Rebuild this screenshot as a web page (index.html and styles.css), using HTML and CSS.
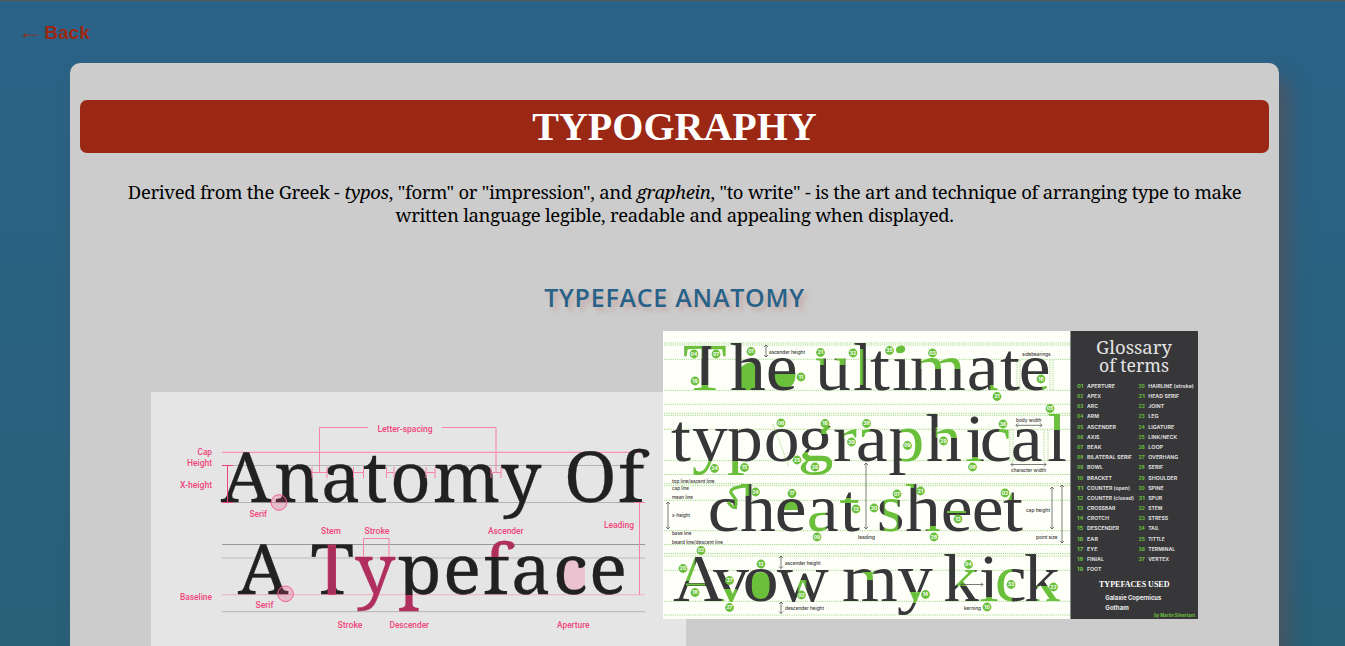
FILE: index.html
```html
<!DOCTYPE html>
<html lang="en">
<head>
<meta charset="utf-8">
<title>Typography</title>
<link rel="stylesheet" href="styles.css">
</head>
<body>
<a class="back"><span class="back-arrow">←</span> Back</a>
<main class="card">
  <h1 class="title">TYPOGRAPHY</h1>
  <p class="intro">Derived from the Greek - <em>typos</em>, "form" or "impression", and <em>graphein</em>, "to write" - is the art and technique of arranging type to make written language legible, readable and appealing when displayed.</p>
  <h2 class="subtitle">TYPEFACE ANATOMY</h2>
  <div class="gallery">
    <svg class="anatomy" viewBox="151 392 535 254">
      <rect x="151" y="392" width="535" height="254" fill="#e5e5e5"/>
      <g fill="none" stroke-width="1">
        <path d="M222 465.5H645M222 502.5H645M222 611.7H645" stroke="#b4b4b4"/>
        <path d="M222 544.5H645" stroke="#999"/>
        <path d="M222 558H645" stroke="#c8c8c8" stroke-width="1.5"/>
        <path d="M222 594.7H645" stroke="#efb9c5" stroke-width="1.3"/>
        <path d="M222 452.3H640" stroke="#f783a5"/>
      </g>
      <path d="M563 575Q563 560 574 560L584 563V567H585V587Q580 591 574 591Q563 590 563 575Z" fill="#ebc3d0"/>
      <g id="anatomyWords"></g>
      <rect x="328" y="545" width="7.5" height="49.5" fill="#a92f5b" stroke="#e43a72" stroke-width=".6"/>
      <g class="pink-lines">
        <path d="M368 427.5H319.5V472.5M442 427.5H496V472.5M363.5 557V538.5H389V557M639.5 502.5V594.5M634 502.5H645"/>
        <path d="M312 472.5H327M312 467V478M327 467V478M353.5 472.5H363.5M353.5 467V478M363.5 467V478M386.5 472.5H394M386.5 467V478M394 467V478M426 472.5H435M426 467V478M435 467V478M491 472.5H501M491 467V478M501 467V478"/>
        <path d="M222 465.5H233M222 502.5H233M227.5 465.5V502.5" stroke="#f0457c"/>
        <circle cx="279" cy="502.5" r="7.8"/>
        <circle cx="285.5" cy="593.8" r="7.8"/>
      </g>
      <g id="anatomyLabels"></g>
    </svg>
    <svg class="sheet" viewBox="663 331 535 288">
      <rect x="663" y="331" width="407.5" height="288" fill="#fffff9"/>
      <g id="guides"></g>
      <path d="M740 390V368Q746 362 753 362Q757 364 757 390ZM772 373H795.5Q796 388 784 388Q773 386 772 373Z" fill="#6bc03b"/>
      <path d="M781 510Q783 500 792 500Q800 500 801 510Z" fill="#6bc03b"/>
      <ellipse cx="761" cy="586" rx="12" ry="14" fill="#6bc03b"/>
      <g id="sheetWords"></g>
      <g class="flourish">
        <path d="M728 502Q737 514 736 500Q734 497 731 493Q729 487 748 486" stroke-width="3"/>
        <path d="M840 501.5H858" stroke-width="2"/>
        <path d="M947 512H966" stroke-width="2"/>
        <path d="M686 584.5H705" stroke-width="2"/>
        <path d="M773 424L789 467" stroke-width=".7" stroke-dasharray="1 1"/>
        <circle cx="899.5" cy="349.7" r="3.5" fill="#6bc03b" stroke="none"/>
      </g>
      <g id="arrows"></g>
      <g id="badges"></g>
      <g id="sheetLabels"></g>
      <rect x="1070.5" y="331" width="127.5" height="288" fill="#373739"/>
      <g id="glossary"></g>
    </svg>
  </div>
</main>
<script src="script.js"></script>
</body>
</html>
```

FILE: styles.css
```css
* { box-sizing: border-box; }
html { height: 100%; overflow: hidden; }
body {
  margin: 0;
  height: 646px;
  overflow: hidden;
  border-top: 1px solid #5a5a5a;
  background: linear-gradient(#2a6388, #286078);
  color: #000;
}
.back {
  display: block;
  height: 62px;
  padding: 19px 0 0 17px;
  color: #9b2815;
  font: bold 19px/24px "Liberation Sans", Arial, sans-serif;
  white-space: nowrap;
}
.back-arrow {
  display: inline-block;
  width: 22px;
  font: normal 20px/24px "Liberation Serif", serif;
  transform: scale(1.3, .9);
  transform-origin: left center;
}
.card {
  width: 1209px;
  height: 583px;
  margin-left: 70px;
  padding: 37px 10px 0;
  border-radius: 10px 10px 0 0;
  background: #ccc;
  box-shadow: 10px 14px 20px rgba(89, 78, 86, .7);
}
.title {
  height: 53px;
  margin: 0;
  border-radius: 7px;
  background: #9b2815;
  color: #fff;
  font: bold 40px/53px "Liberation Serif", "Times New Roman", serif;
  text-align: center;
}
.intro {
  margin: 27px 0 0;
  padding: 0 20px;
  font: 18.5px/23px "Noto Serif", "DejaVu Serif Condensed", "DejaVu Serif", serif;
  letter-spacing: -.37px;
  word-spacing: .3px;
  text-align: center;
  text-indent: 20px;
}
.subtitle {
  margin: 54px 0 0;
  color: #286288;
  font: 600 25px/34px "Open Sans", "Noto Sans", sans-serif;
  letter-spacing: .75px;
  text-align: center;
  text-shadow: 4px 4px 5px rgba(180, 60, 50, .25);
}
.gallery {
  display: flex;
  align-items: flex-start;
  padding: 17px 0 0 71px;
}
.anatomy { width: 535px; height: 254px; margin-top: 61px; flex: none; }
.sheet { width: 535px; height: 288px; margin-left: -23px; flex: none; }
.pink-lines { fill: none; stroke: #f783a5; stroke-width: 1; }
.pink-lines circle { fill: rgba(240, 69, 124, .25); stroke: #f0628f; }
.anatomy-label { font: 500 8.2px Roboto, sans-serif; fill: #f0457c; }
.flourish { fill: none; stroke: #6bc03b; }
.guide { fill: none; stroke: #a3d98a; stroke-width: 1; stroke-dasharray: 1.2 1; }
.arrow { fill: none; stroke: #444; stroke-width: .7; }
.badge { fill: #6bc03b; }
.badge-number { font: bold 5px Inter, sans-serif; fill: #fff; text-anchor: middle; }
.sheet-label { font: 500 4.8px Inter, sans-serif; fill: #333; }
.gloss-title { font: 400 18.5px "Noto Serif", serif; fill: #e4e4e4; }
.gloss-number { font: bold 5px Inter, sans-serif; fill: #6bc03b; }
.gloss-term { font: bold 5px Inter, sans-serif; fill: #ddd; }
.gloss-used { font: bold 8px "Liberation Serif", serif; fill: #fff; }
.gloss-face { font: bold 6px Inter, sans-serif; fill: #eee; }
.gloss-credit { font: bold 4.5px Inter, sans-serif; fill: #6bc03b; }
```

FILE: script.js
```js
const NS = "http://www.w3.org/2000/svg";
const GREEN = "#6bc03b";
const pen = document.createElement("canvas").getContext("2d");
let paintCount = 0;

function add(parent, tag, attrs, text) {
  const el = document.createElementNS(NS, tag);
  for (const key in attrs) el.setAttribute(key, attrs[key]);
  if (text !== undefined) el.textContent = text;
  parent.appendChild(el);
  return el;
}

// Places each glyph so that its ink starts at the given x.
// The accent areas recolour parts of the glyphs through a pattern paint.
function line(parent, text, lefts, y, font, size, sx, weight, base, accent, areas) {
  pen.font = size + "px " + font;
  let last = 0, n = 0;
  const xs = [...text].map(ch => {
    if (ch !== " ") last = lefts[n++] / sx + pen.measureText(ch).actualBoundingBoxLeft;
    else last += 10;
    return last.toFixed(2);
  }).join(" ");
  let paint = base;
  if (areas) {
    const id = "paint" + paintCount++;
    const pattern = add(parent, "pattern", { id, patternUnits: "userSpaceOnUse", width: 1400, height: 700,
      patternTransform: `scale(${1 / sx} 1)` });
    add(pattern, "rect", { width: 1400, height: 700, fill: base });
    areas.forEach(([x, top, w, h]) => add(pattern, "rect", { x, y: top, width: w, height: h, fill: accent }));
    paint = `url(#${id})`;
  }
  add(parent, "text", { x: xs, y, transform: `scale(${sx} 1)`, fill: paint, stroke: paint,
    "stroke-width": weight, style: `font:${size}px ${font}` }, text);
}

function fitted(parent, cls, rows) {
  rows.forEach(([text, x, y, w]) => {
    const attrs = { class: cls, x, y };
    if (w) { attrs.textLength = w; attrs.lengthAdjust = "spacingAndGlyphs"; }
    add(parent, "text", attrs, text);
  });
}

const $ = id => document.getElementById(id);

const noto = '"Noto Serif", "DejaVu Serif Condensed", "DejaVu Serif", serif';
const aw = $("anatomyWords");
line(aw, "Anatomy Of", [221, 275, 324, 363.5, 393, 434, 501, 567, 619], 502.3, noto, 69, 1.03, .3, "#212121");
line(aw, "A Typeface", [238, 311.5, 355, 398, 446, 484, 514, 556, 592], 594.5, noto, 69, 1.03, .3, "#212121",
  "#b02f5e", [[353, 550, 43.5, 70], [396.5, 595, 30, 30], [480, 535, 34, 22]]);

fitted($("anatomyLabels"), "anatomy-label", [
  ["Letter-spacing", 377.5, 431.5, 55], ["Cap", 197.5, 455, 14.5], ["Height", 187, 466, 25],
  ["X-height", 180, 488, 32], ["Serif", 249.5, 517.3, 17.5], ["Stem", 321, 534, 20],
  ["Stroke", 364.5, 534, 25], ["Ascender", 488, 534, 35.5], ["Leading", 604, 528.2, 30],
  ["Baseline", 180, 599.5, 32], ["Serif", 255.5, 608.3, 18], ["Stroke", 337.5, 628.3, 25],
  ["Descender", 389.5, 628.3, 39.5], ["Aperture", 557, 628.3, 32.5]
]);

[343, 345, 359.3, 390.3, 404.3, 413.3, 415.3, 429.3, 460.7, 474.5, 483.7, 485.7, 500.3, 530.7, 544.5,
 553.5, 556, 570.3, 601.3, 615].forEach(y => add($("guides"), "path", { class: "guide", d: `M664 ${y}H1070` }));
["M1017 360V390M1020 360V390M1050 360V390M1053 360V390", "M1010 430V460M1013 430V460M1044 430V460M1048 430V460"]
  .forEach(d => add($("guides"), "path", { class: "guide", d }));

const serif = '"Liberation Serif", serif';
const rows = [
  ["The ultimate", [684, 730, 768, 815, 854, 870, 893, 911, 969, 1000, 1021], 390,
    [[684, 343, 18, 16], [711, 343, 18, 16], [690, 385, 30, 7], [815, 355, 9, 10], [836, 355, 9, 10],
     [857, 349, 6, 36], [921, 355, 42, 14], [990, 385, 11, 9], [1042, 381, 8, 8], [897, 340, 9, 14]]],
  ["typographical", [671, 692, 728, 766, 800, 834, 858, 889.5, 926, 966, 982, 1013, 1048], 460.7,
    [[690, 461, 34, 20], [726, 461, 19, 20], [821, 427, 12, 7], [800, 452, 34, 25], [844, 427, 13, 12],
     [858, 427, 12, 13], [901, 427, 24, 35], [936, 427, 23, 11], [964, 457, 17, 6], [999, 427, 11, 14], [1046, 411, 14, 19]]],
  ["cheat sheet", [710, 740, 777, 809, 840, 879, 905, 943, 974, 1003], 530.7,
    [[740, 482, 9, 14], [809, 510, 17, 24], [838, 498, 22, 5], [884, 499, 14, 34], [904, 482, 10, 6],
     [927, 526, 15, 6], [1003, 492, 9, 8]]],
  ["Avow my kick", [673, 713, 745, 777, 843, 897, 944, 980, 997, 1025], 601,
    [[685, 554, 10, 27], [722, 589, 15, 14], [798, 580, 8, 12], [862, 572, 12, 8], [907, 592, 14, 11],
     [957, 569, 18, 17], [980, 597, 16, 5], [996, 569, 16, 35], [1037, 586, 24, 17]]]
];
rows.forEach(([text, xs, y, areas]) =>
  line($("sheetWords"), text, xs, y, serif, 67, 1.07, 0, "#373739", GREEN, areas));

[[694, 354, "04"], [716, 354, "07"], [695, 381, "19"], [751, 351.5, "01"], [801, 377, "11"], [820.5, 352.5, "21"],
 [853, 353, "32"], [889.5, 350.5, "35"], [932.5, 353, "03"], [1041, 379, "18"], [997, 396.5, "31"],
 [781, 423, "06"], [825, 423.5, "16"], [851.5, 442, "39"], [866.5, 423.5, "38"], [714.5, 468.5, "34"],
 [744.5, 467.5, "15"], [797, 460, "25"], [815, 467, "26"], [907.5, 445.5, "09"], [943.5, 441, "29"],
 [972.5, 467, "08"], [1003, 424, "36"], [1050, 408.5, "05"], [755.5, 492, "24"], [792, 493.5, "17"],
 [856, 509, "13"], [817, 537, "09"], [897, 494, "07"], [920.5, 491, "21"], [874, 508, "30"], [958, 519, "13"],
 [934, 537, "28"], [1005, 493, "02"], [701, 550.5, "02"], [683, 568.5, "20"], [695, 592.5, "18"],
 [729.5, 580.5, "37"], [729.5, 607.5, "27"], [761, 564, "12"], [801.5, 595, "02"], [925.5, 594.5, "14"],
 [968.5, 564.5, "04"], [987, 607, "10"], [1011, 584.5, "33"], [1053.5, 587, "22"]
].forEach(([x, y, t]) => {
  add($("badges"), "circle", { class: "badge", cx: x, cy: y, r: 4.4 });
  add($("badges"), "text", { class: "badge-number", x, y: y + 1.8 }, t);
});

[[766, 345, 357], [668, 502, 529], [781, 556, 568.5], [781, 602, 613.5], [866, 463, 529], [1052, 487, 529], [1062, 485, 543]]
  .forEach(([x, a, b]) => add($("arrows"), "path", { class: "arrow",
    d: `M${x} ${a}V${b}M${x - 2} ${a + 2}L${x} ${a}L${x + 2} ${a + 2}M${x - 2} ${b - 2}L${x} ${b}L${x + 2} ${b - 2}` }));
[[425.3, 1016, 1042], [464.5, 1011, 1046], [584.5, 961, 983]]
  .forEach(([y, a, b]) => add($("arrows"), "path", { class: "arrow",
    d: `M${a} ${y}H${b}M${a + 2} ${y - 2}L${a} ${y}L${a + 2} ${y + 2}M${b - 2} ${y - 2}L${b} ${y}L${b - 2} ${y + 2}` }));

fitted($("sheetLabels"), "sheet-label", [
  ["ascender height", 769, 353.5, 36], ["sidebearings", 1022, 356.3, 28.5], ["body width", 1016, 421.5, 25.5],
  ["character width", 1011, 472, 35], ["top line/ascent line", 672, 482.7, 42.5], ["cap line", 672, 490, 17],
  ["mean line", 672, 499.3, 21], ["x-height", 672, 517.3, 18], ["base line", 672, 535, 19.5],
  ["beard line/descent line", 672, 543.7, 51], ["leading", 858, 539.3, 17], ["cap height", 1026, 512, 24],
  ["point size", 1036, 539.3, 21.5], ["ascender height", 785, 565.3, 35.5], ["descender height", 785, 610.3, 39],
  ["kerning", 964, 610.3, 17]
]);

const g = $("glossary");
fitted(g, "gloss-title", [["Glossary", 1096, 354, 76], ["of terms", 1099, 372, 70]]);
const terms = [["APERTURE", 28], ["APEX", 14], ["ARC", 11], ["ARM", 12], ["ASCENDER", 29], ["AXIS", 12.5], ["BEAK", 14.5],
  ["BILATERAL SERIF", 45], ["BOWL", 16], ["BRACKET", 25], ["COUNTER (open)", 43], ["COUNTER (closed)", 47],
  ["CROSSBAR", 28.5], ["CROTCH", 22], ["DESCENDER", 32], ["EAR", 11], ["EYE", 10.5], ["FINIAL", 17], ["FOOT", 14.5],
  ["HAIRLINE (stroke)", 45.5], ["HEAD SERIF", 31], ["JOINT", 16], ["LEG", 10.5], ["LIGATURE", 26], ["LINK/NECK", 29],
  ["LOOP", 15], ["OVERHANG", 30], ["SERIF", 15], ["SHOULDER", 29], ["SPINE", 15.5], ["SPUR", 14], ["STEM", 14],
  ["STRESS", 20], ["TAIL", 11], ["TITTLE", 16.5], ["TERMINAL", 27], ["VERTEX", 21]];
terms.forEach(([term, w], i) => {
  const col = i < 19 ? 0 : 1;
  const y = 387.9 + (i - col * 19) * 10.18;
  fitted(g, "gloss-number", [[String(i + 1).padStart(2, "0"), 1077 + col * 61.5, y, 6.3]]);
  fitted(g, "gloss-term", [[term, 1087 + col * 61.2, y, w]]);
});
fitted(g, "gloss-used", [["TYPEFACES USED", 1099, 587, 70.5]]);
fitted(g, "gloss-face", [["Galaxie Copernicus", 1105.3, 599.5, 56], ["Gotham", 1105.3, 609.8, 23.5]]);
fitted(g, "gloss-credit", [["by Martin Silvertant", 1154, 616.6, 41]]);
```
